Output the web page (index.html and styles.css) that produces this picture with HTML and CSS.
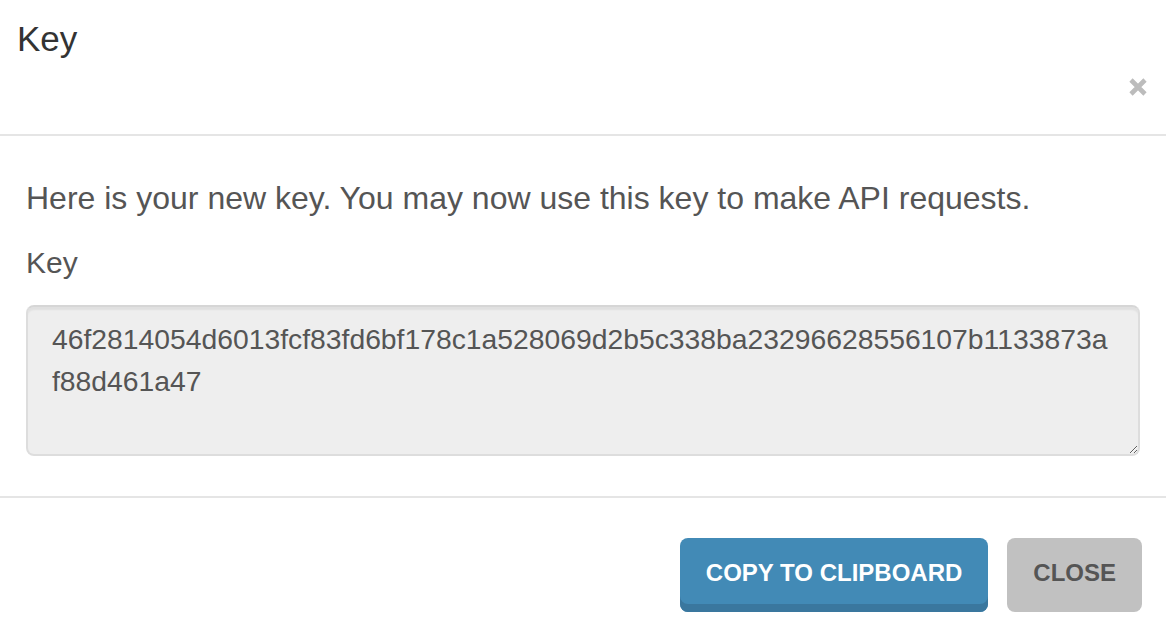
FILE: index.html
```html
<!DOCTYPE html>
<html lang="en">
<head>
<meta charset="utf-8">
<title>Key</title>
<link rel="stylesheet" href="styles.css">
</head>
<body>
<div class="modal">
  <div class="modal-header">
    <h4 class="modal-title">Key</h4>
    <button class="close" type="button" aria-label="Close">
      <svg width="20" height="20" viewBox="0 0 20 20"><path d="M3 3 L17 17 M17 3 L3 17" stroke="#bcbcbc" stroke-width="4.6" stroke-linecap="butt"/></svg>
    </button>
  </div>
  <div class="modal-body">
    <p class="intro">Here is your new key. You may now use this key to make API requests.</p>
    <label class="field-label" for="key">Key</label>
    <textarea id="key" class="key-box" readonly>46f2814054d6013fcf83fd6bf178c1a528069d2b5c338ba23296628556107b1133873af88d461a47</textarea>
  </div>
  <div class="modal-footer">
    <button class="btn btn-primary" type="button">COPY TO CLIPBOARD</button>
    <button class="btn btn-default" type="button">CLOSE</button>
  </div>
</div>
</body>
</html>
```

FILE: styles.css
```css
html, body {
  margin: 0;
  padding: 0;
  background: #ffffff;
}
body {
  font-family: "Liberation Sans", Arial, Helvetica, sans-serif;
  color: #555555;
}
.modal {
  width: 1166px;
  height: 630px;
  display: flex;
  flex-direction: column;
  overflow: hidden;
}
.modal-header {
  height: 117px;
  padding: 17px 18px 0 17px;
  border-bottom: 2px solid #e5e5e5;
  display: flex;
  justify-content: space-between;
  align-items: flex-start;
  flex-shrink: 0;
}
.modal-title {
  margin: 0;
  font-size: 35px;
  line-height: 44px;
  font-weight: normal;
  color: #333333;
}
.close {
  align-self: flex-end;
  margin: 0 0 37px 0;
  padding: 0;
  border: 0;
  background: transparent;
  width: 20px;
  height: 20px;
  display: block;
  cursor: pointer;
}
.close svg {
  display: block;
}
.modal-body {
  padding: 39px 26px 40px 26px;
  border-bottom: 2px solid #e5e5e5;
  display: flex;
  flex-direction: column;
  flex-shrink: 0;
}
.intro {
  margin: 0;
  font-size: 32px;
  line-height: 46px;
  color: #555555;
}
.field-label {
  display: block;
  margin-top: 20px;
  font-size: 30px;
  line-height: 44px;
  color: #555555;
}
.key-box {
  margin: 20px 0 0 0;
  width: 1114px;
  height: 151px;
  box-sizing: border-box;
  padding: 11px 27px 0 24px;
  border: 2px solid #dddddd;
  border-top-color: #d6d6d6;
  border-radius: 8px;
  background: #eeeeee;
  box-shadow: inset 0 4px 2px -1px rgba(0, 0, 0, 0.06);
  font-family: "Liberation Sans", Arial, Helvetica, sans-serif;
  font-size: 28.3px;
  line-height: 42px;
  color: #555555;
  outline: none;
  display: block;
}
.modal-footer {
  padding: 40px 24px 0 24px;
  display: flex;
  justify-content: flex-end;
  gap: 19px;
}
.btn {
  height: 74px;
  box-sizing: border-box;
  padding: 0 26px 4px 26px;
  border: 0;
  border-radius: 8px;
  font-family: "Liberation Sans", Arial, Helvetica, sans-serif;
  font-size: 24px;
  font-weight: bold;
  display: flex;
  align-items: center;
  cursor: pointer;
}
.btn-primary {
  background: #428ab6;
  color: #ffffff;
  box-shadow: inset 0 -8px 0 #3a779e;
}
.btn-default {
  background: #c1c1c1;
  color: #555555;
}
```
